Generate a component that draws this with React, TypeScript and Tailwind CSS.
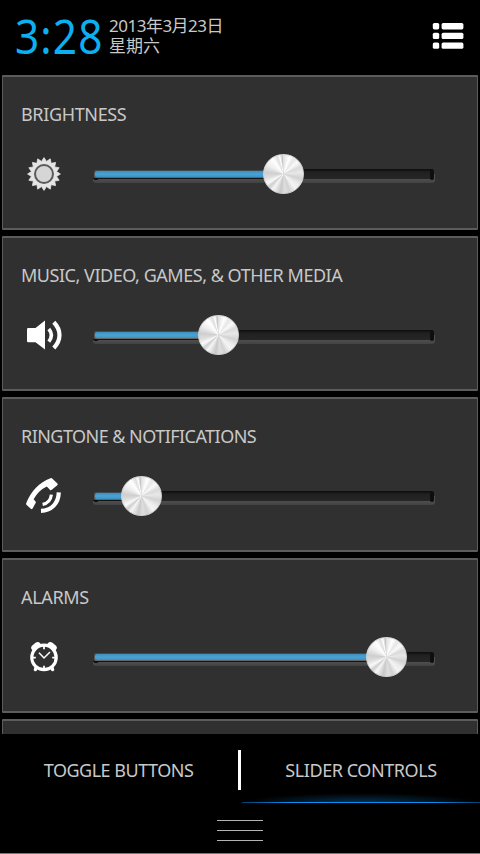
import { useState } from 'react';

const GEAR_TEETH = Array.from({ length: 32 }, (_, i) => {
  const r = i % 2 === 0 ? 16.4 : 12.8;
  const a = (i * Math.PI) / 16 - Math.PI / 2;
  return `${(20 + r * Math.cos(a)).toFixed(2)},${(20 + r * Math.sin(a)).toFixed(2)}`;
}).join(' ');

function BrightnessIcon() {
  return (
    <svg viewBox="0 0 40 40" className="h-10 w-10">
      <polygon points={GEAR_TEETH} fill="#e4e4e4" stroke="#e4e4e4" strokeWidth="0.8" />
      <circle cx="20" cy="20" r="9" fill="#d6d6d6" stroke="#5a5a5a" strokeWidth="2" />
    </svg>
  );
}

function SpeakerIcon() {
  return (
    <svg viewBox="0 0 40 40" className="h-10 w-10" fill="none" stroke="#fff">
      <path d="M3 14.2q0-1.2 1.2-1.2H11.5L21 5.6V34.6L11.5 27.2H4.2Q3 27.2 3 26Z" fill="#fff" stroke="none" />
      <path d="M24.8 14C28.2 18 28.2 22.4 24.8 26.6" strokeWidth="3.6" />
      <path d="M29.8 7.2C37.4 15 37.4 25.2 29.8 33" strokeWidth="4.2" />
    </svg>
  );
}

function RingtoneIcon() {
  return (
    <svg viewBox="0 0 40 40" className="h-10 w-10" fill="none" stroke="#fff">
      <path
        d="M26.4 2.2Q27.4 1.6 28.2 2.6L33.4 7.6Q34.2 8.4 33.3 9.2L27.8 13.8Q26.8 14.7 25.9 13.7L22.8 10.4Q14.6 14.2 9.6 23.2L11.6 25.4Q12.2 26.2 11.6 27L8.6 32.6Q7.8 33.7 6.8 32.8L2.4 28.8Q1.7 28 2.3 27C7 14.8 15.4 6.6 26.4 2.2Z"
        fill="#fff"
        stroke="none"
      />
      <path d="M27.4 18.6C26.7 23.9 24 27.4 18.6 28.4" strokeWidth="3.2" />
      <path d="M34.8 16.4C34.4 27.5 27.6 34.4 17 34.9" strokeWidth="4.2" />
    </svg>
  );
}

function AlarmIcon() {
  return (
    <svg viewBox="0 0 40 40" className="h-10 w-10" fill="none" stroke="#fff">
      <path d="M10.6 10.8L13.6 8.4M29.4 10.8L26.4 8.4" strokeWidth="6.6" strokeLinecap="round" />
      <circle cx="20" cy="20.4" r="12.2" fill="#303030" strokeWidth="3.2" />
      <path d="M12 31L11.4 32.6M28 31L28.6 32.6" strokeWidth="3.4" strokeLinecap="round" />
      <path d="M20 8.5v3.7M20 28.8v3M8.5 20.6h3.3M28.2 20.6h3.3" strokeWidth="1.8" />
      <path d="M15 15.8L20 21L26 15" strokeWidth="1.5" />
    </svg>
  );
}

function ListIcon() {
  return (
    <svg viewBox="0 0 32 28" className="h-7 w-8" fill="#fff">
      {[1, 10.7, 20.4].map(y => (
        <g key={y}>
          <rect x="0.8" y={y} width="6.4" height="6.4" rx="1.6" />
          <rect x="9.6" y={y} width="21.8" height="6.4" rx="1.6" />
        </g>
      ))}
    </svg>
  );
}

const SLIDERS = [
  { id: 'brightness', label: 'BRIGHTNESS', icon: BrightnessIcon, value: 190.5, tracking: 'tracking-[-0.35px]' },
  { id: 'media', label: 'MUSIC, VIDEO, GAMES, & OTHER MEDIA', icon: SpeakerIcon, value: 125.5, tracking: 'tracking-[-0.47px]' },
  { id: 'ringtone', label: 'RINGTONE & NOTIFICATIONS', icon: RingtoneIcon, value: 48.5, tracking: 'tracking-[-0.54px]' },
  { id: 'alarms', label: 'ALARMS', icon: AlarmIcon, value: 293.5, tracking: 'tracking-[-0.35px]' },
];

function Slider({ value }: { value: number }) {
  return (
    <div className="relative h-10 w-[342px]">
      {/* groove */}
      <div className="absolute left-0 top-[20px] h-[9px] w-full rounded-b-[3px] bg-linear-to-b from-[#505050] from-50% to-[#424242]" />
      <div className="absolute left-px top-[15px] h-[10px] w-[340px] rounded-[2px] bg-linear-to-b from-[#0c0c0c] via-[#202020] via-30% to-[#262626]" />
      <div className="absolute left-[337px] top-[16px] h-[10px] w-[4px] rounded-[2px] bg-[#0e0e0e]" />
      {/* filled part */}
      <div className="absolute left-0 top-[15px] h-[10px] border-b border-[#141414] bg-[#303030]" style={{ width: value }}>
        <div className="ml-px mt-px h-2 rounded-[2px] bg-linear-to-b from-[#3a4a54] to-[#666]" />
      </div>
      <div className="absolute left-[2px] top-[17px] h-[6px] rounded-[2px] bg-linear-to-b from-[#3d8fbd] via-[#4aa3d4] to-[#3f92c2]" style={{ width: value }} />
      <div className="absolute left-px top-[24px] h-[2px] w-1 rounded-sm bg-[#0e0e0e]" />
      <div
        className="absolute top-0 h-10 w-[41px] rounded-full border border-[#d0d0d0] bg-[conic-gradient(#e0e0e0,#fff_20deg,#e6e6e6_35deg,#fafafa_50deg,#dadada_68deg,#e8e8e8_85deg,#d2d2d2_105deg,#ececec_125deg,#f4f4f4_140deg,#d2d2d2_160deg,#dedede_175deg,#c8c8c8_190deg,#f6f6f6_215deg,#cecece_228deg,#fafafa_240deg,#dcdcdc_258deg,#cecece_275deg,#eee_300deg,#fff_325deg,#dedede_340deg,#fff_348deg,#c2c2c2_356deg,#e0e0e0)]"
        style={{ left: value - 20.5 }}
      />
    </div>
  );
}

export default function App() {
  const [tab, setTab] = useState<'toggle' | 'slider'>('slider');

  return (
    <div className="flex h-[854px] w-[480px] flex-col overflow-hidden bg-black font-['Noto_Sans','Noto_Sans_CJK_SC',sans-serif] text-[#c8c8c8]">
      <header className="flex h-[75px] shrink-0 items-start pl-[15px] pr-4">
        <div className="w-[94px] origin-left scale-x-90 pt-[6px] text-[47px] leading-[60px] tracking-[1.3px] whitespace-nowrap text-[#0cb0f0]">3:28</div>
        <div className="flex-1 pt-4 text-[17px] leading-5 tracking-[-0.5px]">
          <p>2013年3月23日</p>
          <p className="tracking-normal">星期六</p>
        </div>
        <button className="pt-[22px]">
          <ListIcon />
        </button>
      </header>

      <main className="flex h-[659px] shrink-0 flex-col gap-1.5 overflow-hidden px-0.5">
        {SLIDERS.map(s => (
          <section key={s.id} className="h-[155px] shrink-0 rounded-[1px] border-x border-y-2 border-[#5c5c5c] bg-[#303030] pl-[18px] pt-[25px]">
            <h2 className={`h-6 text-[18px] leading-6 whitespace-nowrap ${s.tracking}`}>{s.label}</h2>
            <div className="mt-7 flex items-center pl-[3px]">
              <s.icon />
              <div className="pl-[29px]">
                <Slider value={s.value} />
              </div>
            </div>
          </section>
        ))}
        <section className="h-[155px] shrink-0 rounded-[1px] border-x border-y-2 border-[#5c5c5c] bg-[#303030]" />
      </main>

      <nav className="flex h-[70px] shrink-0 text-[18px]">
        <button onClick={() => setTab('toggle')} className="h-[73px] w-[238px] pr-px whitespace-nowrap tracking-[-0.5px]">
          TOGGLE BUTTONS
        </button>
        <div className="mt-4 h-10 w-[3px] bg-white" />
        <button onClick={() => setTab('slider')} className="relative h-[73px] flex-1 pl-px whitespace-nowrap tracking-[-0.42px]">
          SLIDER CONTROLS
          {tab === 'slider' && (
            <span className="absolute bottom-[4px] left-px right-0 h-[10px] bg-[radial-gradient(ellipse_50%_100%_at_50%_100%,#063352,transparent)]">
              <span className="absolute bottom-0 left-0 right-0 h-px bg-[linear-gradient(90deg,#063f6b,#0a90f0_20%,#0a90f0_80%,#063f6b)]" />
            </span>
          )}
        </button>
      </nav>

      <footer className="flex flex-1 flex-col items-center gap-[9px] border-b border-[#777] pt-4">
        <div className="h-px w-[46px] bg-[#b4b4b4]" />
        <div className="h-px w-[46px] bg-[#b4b4b4]" />
        <div className="h-px w-[46px] bg-[#b4b4b4]" />
      </footer>
    </div>
  );
}
